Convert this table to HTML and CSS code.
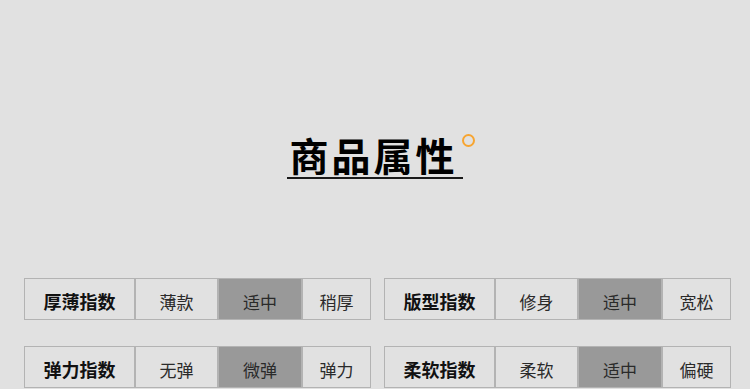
FILE: index.html
```html
<!DOCTYPE html>
<html lang="zh">
<head>
<meta charset="utf-8">
<link rel="stylesheet" href="styles.css">
</head>
<body>
<div class="page">
  <div class="title-wrap">
    <h1 class="title">商品属性</h1>
  </div>
  <div class="grid">
    <div class="attr">
      <div class="cell label">厚薄指数</div>
      <div class="cell v1">薄款</div>
      <div class="cell v2 on">适中</div>
      <div class="cell v3">稍厚</div>
    </div>
    <div class="attr">
      <div class="cell label">版型指数</div>
      <div class="cell v1">修身</div>
      <div class="cell v2 on">适中</div>
      <div class="cell v3">宽松</div>
    </div>
    <div class="attr">
      <div class="cell label">弹力指数</div>
      <div class="cell v1">无弹</div>
      <div class="cell v2 on">微弹</div>
      <div class="cell v3">弹力</div>
    </div>
    <div class="attr">
      <div class="cell label">柔软指数</div>
      <div class="cell v1">柔软</div>
      <div class="cell v2 on">适中</div>
      <div class="cell v3">偏硬</div>
    </div>
  </div>
</div>
</body>
</html>
```
FILE: styles.css
```css
* { box-sizing: border-box; }
html, body {
  margin: 0;
  padding: 0;
  background: #e1e1e1;
  overflow: hidden;
}
body {
  font-family: "Noto Sans CJK SC", "Noto Sans", sans-serif;
  width: 750px;
  height: 389px;
}
.title-wrap {
  padding-top: 134px;
  text-align: center;
}
.title {
  position: relative;
  display: inline-block;
  margin: 0;
  padding: 0 5px 3px 2px;
  font-size: 39px;
  line-height: 40px;
  font-weight: 700;
  letter-spacing: 3px;
  color: #000;
  border-bottom: 2px solid #1a1a1a;
}
.title::after {
  content: "";
  position: absolute;
  left: 175px;
  top: 0;
  width: 9px;
  height: 9px;
  border: 2px solid #f7a531;
  border-radius: 50%;
}
.grid {
  display: grid;
  grid-template-columns: 347px 347px;
  column-gap: 13px;
  row-gap: 26px;
  padding-left: 24px;
  margin-top: 99px;
}
.attr {
  display: flex;
  height: 42px;
}
.cell {
  display: flex;
  align-items: center;
  justify-content: center;
  border: 1px solid #b3b3b3;
  padding-top: 4px;
  font-size: 17px;
  color: #2a2a2a;
}
.label {
  width: 111px;
  font-size: 18px;
  font-weight: 700;
  color: #111;
}
.v1 { width: 83px; }
.v2 { width: 84px; }
.v3 { width: 69px; }
.on {
  background: #999999;
}
```
